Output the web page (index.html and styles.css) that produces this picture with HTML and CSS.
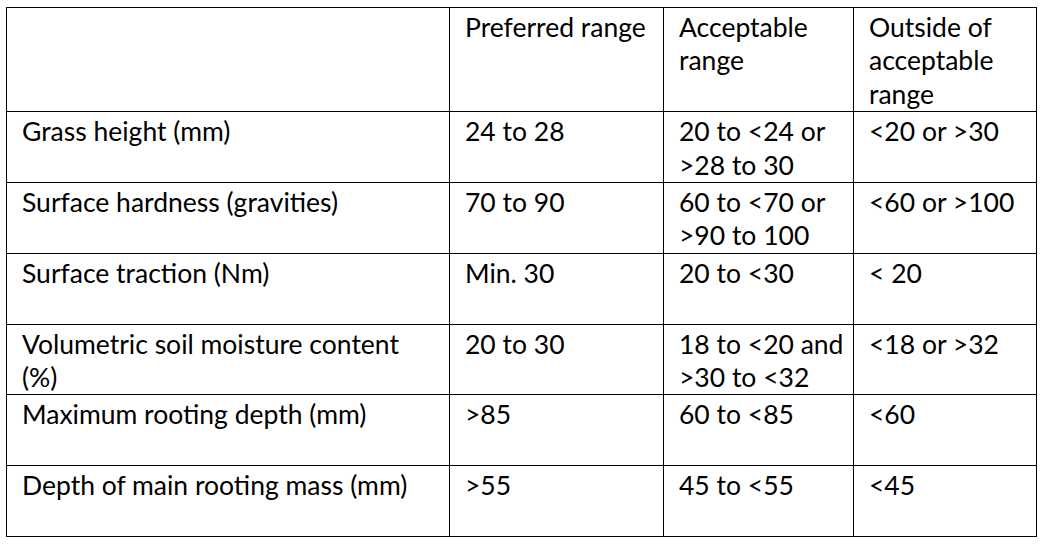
FILE: index.html
```
<!DOCTYPE html>
<html lang="en">
<head>
<meta charset="utf-8">
<title>Turf standards</title>
<link rel="stylesheet" href="styles.css">
</head>
<body>
<table class="spec">
  <colgroup>
    <col class="c1"><col class="c2"><col class="c3"><col class="c4">
  </colgroup>
  <thead>
    <tr class="head">
      <th></th>
      <th>Preferred range</th>
      <th>Acceptable<br>range</th>
      <th>Outside of<br>acceptable<br>range</th>
    </tr>
  </thead>
  <tbody>
    <tr>
      <td>Grass height (mm)</td>
      <td>24 to 28</td>
      <td>20 to &lt;24 or<br>&gt;28 to 30</td>
      <td>&lt;20 or &gt;30</td>
    </tr>
    <tr>
      <td>Surface hardness (gravities)</td>
      <td>70 to 90</td>
      <td>60 to &lt;70 or<br>&gt;90 to 100</td>
      <td>&lt;60 or &gt;100</td>
    </tr>
    <tr>
      <td>Surface traction (Nm)</td>
      <td>Min. 30</td>
      <td>20 to &lt;30</td>
      <td>&lt; 20</td>
    </tr>
    <tr>
      <td>Volumetric soil moisture content<br>(%)</td>
      <td>20 to 30</td>
      <td>18 to &lt;20 and<br>&gt;30 to &lt;32</td>
      <td>&lt;18 or &gt;32</td>
    </tr>
    <tr>
      <td>Maximum rooting depth (mm)</td>
      <td>&gt;85</td>
      <td>60 to &lt;85</td>
      <td>&lt;60</td>
    </tr>
    <tr>
      <td>Depth of main rooting mass (mm)</td>
      <td>&gt;55</td>
      <td>45 to &lt;55</td>
      <td>&lt;45</td>
    </tr>
  </tbody>
</table>
</body>
</html>
```
FILE: styles.css
```
html, body {
  margin: 0;
  padding: 0;
  background: #ffffff;
}

body {
  font-family: "Lato", "Liberation Sans", sans-serif;
  font-size: 26.5px;
  color: #000000;
}

.spec {
  margin: 7px 0 0 6px;
  width: 1030px;
  border-collapse: collapse;
  table-layout: fixed;
}

.c1 { width: 443px; }
.c2 { width: 214px; }
.c3 { width: 190px; }
.c4 { width: 183px; }

.spec th,
.spec td {
  border: 1px solid #000000;
  padding: 3px 6px 0 15px;
  line-height: 33.4px;
  height: 66.8px;
  vertical-align: top;
  text-align: left;
  font-weight: normal;
  white-space: nowrap;
}

.spec .head th {
  height: 100.2px;
}
```
